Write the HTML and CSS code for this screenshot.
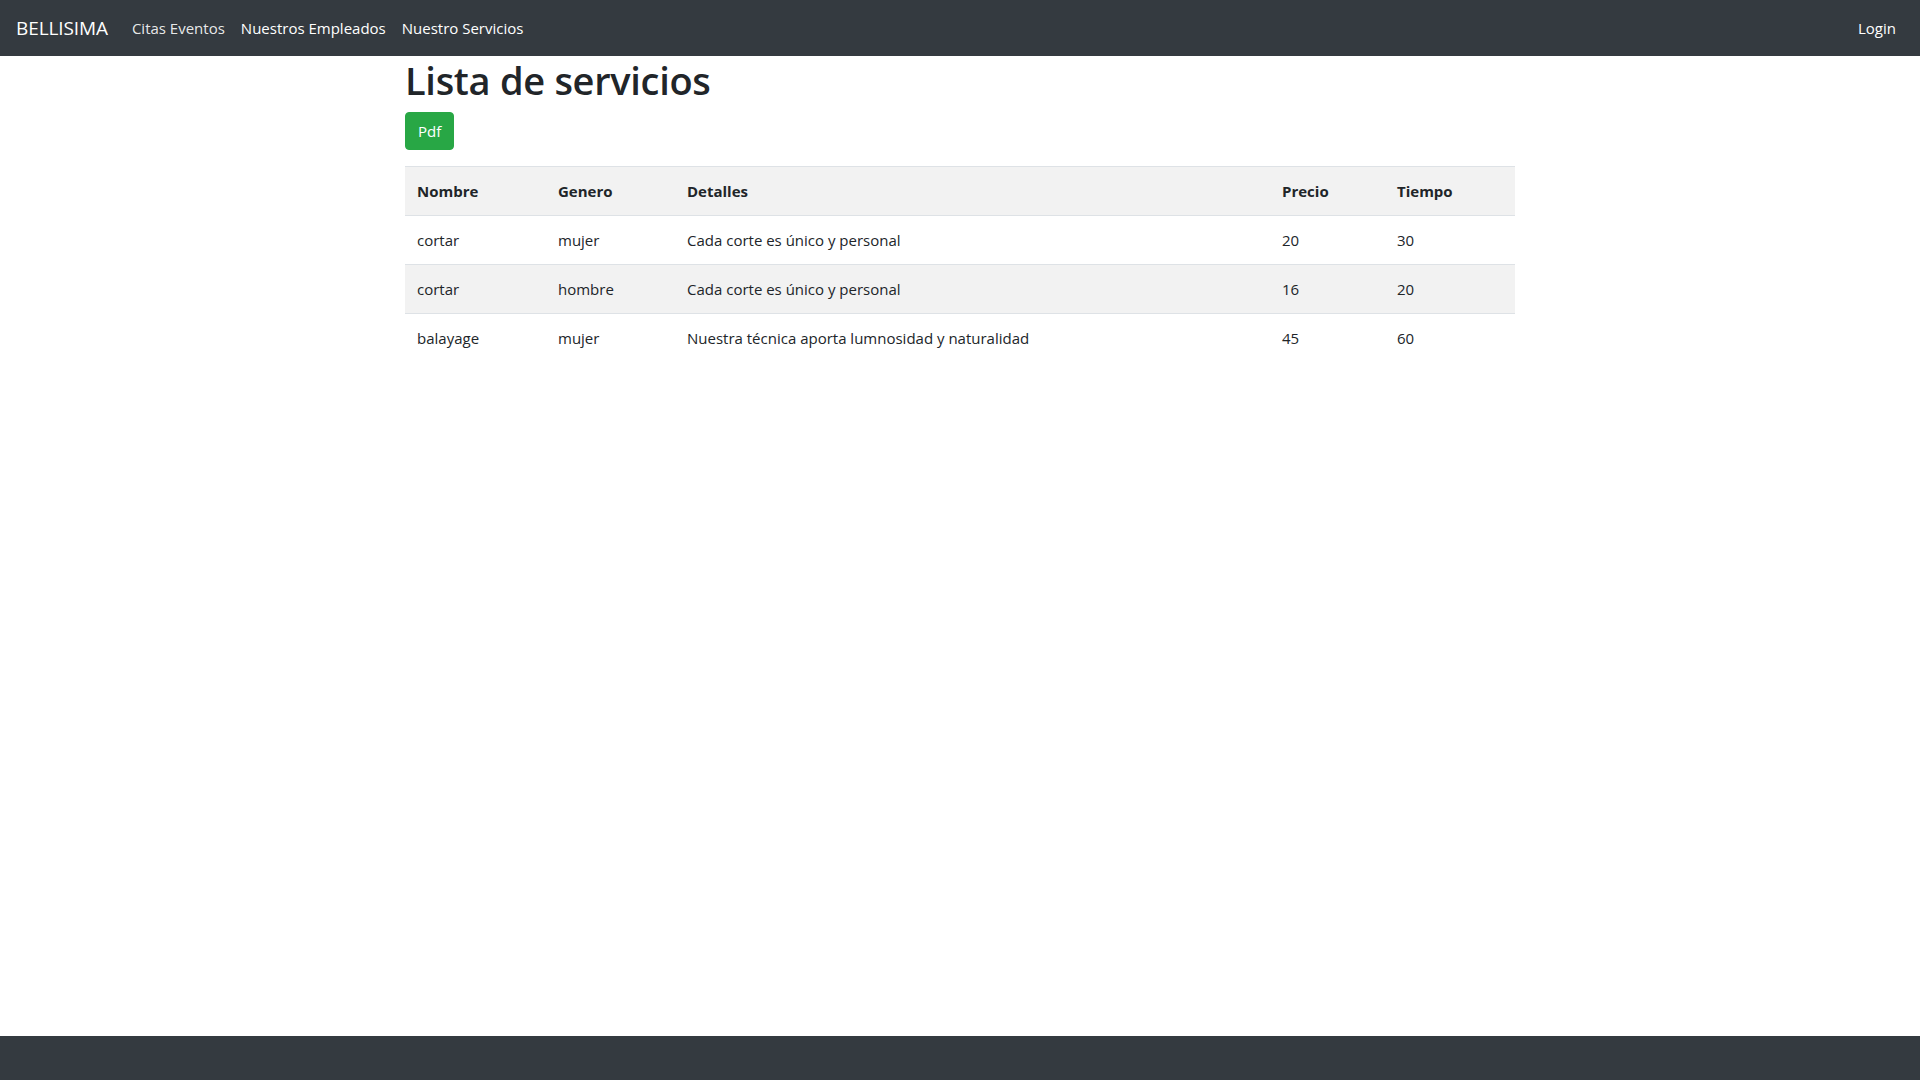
FILE: index.html
```html
<!DOCTYPE html>
<html lang="es">
<head>
<meta charset="utf-8">
<title>Lista de servicios</title>
<link rel="stylesheet" href="styles.css">
</head>
<body>
<nav class="navbar">
  <a class="brand" href="#">BELLISIMA</a>
  <ul class="nav-links">
    <li><a class="nav-link dim" href="#">Citas Eventos</a></li>
    <li><a class="nav-link" href="#">Nuestros Empleados</a></li>
    <li><a class="nav-link" href="#">Nuestro Servicios</a></li>
  </ul>
  <a class="nav-link login" href="#">Login</a>
</nav>
<main class="container">
  <h1 class="title">Lista de servicios</h1>
  <a class="btn-pdf" href="#">Pdf</a>
  <table class="table">
    <colgroup>
      <col class="c-nombre"><col class="c-genero"><col class="c-detalles"><col class="c-precio"><col class="c-tiempo">
    </colgroup>
    <tbody>
      <tr class="shade head">
        <th>Nombre</th><th>Genero</th><th>Detalles</th><th>Precio</th><th>Tiempo</th>
      </tr>
      <tr>
        <td>cortar</td><td>mujer</td><td>Cada corte es único y personal</td><td>20</td><td>30</td>
      </tr>
      <tr class="shade">
        <td>cortar</td><td>hombre</td><td>Cada corte es único y personal</td><td>16</td><td>20</td>
      </tr>
      <tr>
        <td>balayage</td><td>mujer</td><td>Nuestra técnica aporta lumnosidad y naturalidad</td><td>45</td><td>60</td>
      </tr>
    </tbody>
  </table>
</main>
<footer class="footer"></footer>
</body>
</html>
```
FILE: styles.css
```css
* { box-sizing: border-box; }
html, body { margin: 0; padding: 0; }
body {
  font-family: "Open Sans", "Noto Sans", "Liberation Sans", sans-serif;
  font-size: 15px;
  line-height: 24px;
  color: #212529;
  background: #fff;
  min-height: 100vh;
  display: flex;
  flex-direction: column;
}
a { text-decoration: none; }

.navbar {
  height: 56px;
  background: #343a40;
  display: flex;
  align-items: center;
  padding: 8px 16px;
}
.brand {
  color: #fff;
  font-size: 19px;
  line-height: 30px;
  margin-right: 16px;
  letter-spacing: -0.1px;
}
.nav-links {
  list-style: none;
  margin: 0;
  padding: 0;
  display: flex;
  flex: 1;
}
.nav-link {
  display: block;
  padding: 8px;
  color: #fff;
  font-size: 15px;
}
.nav-link.dim { color: rgba(255,255,255,0.9); }
.login { padding-right: 8px; }

.container {
  flex: 1;
  width: 1140px;
  margin: 0 auto;
  padding: 0 15px;
}
.title {
  margin: 0 0 8px;
  font-size: 38px;
  font-weight: 600;
  line-height: 48px;
  letter-spacing: -0.3px;
}
.btn-pdf {
  display: inline-block;
  height: 38px;
  padding: 6px 12px;
  background: #28a745;
  color: #fff;
  border: 1px solid #28a745;
  border-radius: 4px;
  font-size: 15px;
  line-height: 24px;
}
.table {
  width: 100%;
  margin-top: 16px;
  border-collapse: collapse;
  table-layout: fixed;
}
.c-nombre { width: 141px; }
.c-genero { width: 129px; }
.c-detalles { width: 595px; }
.c-precio { width: 115px; }
.c-tiempo { width: 130px; }
.table th, .table td {
  padding: 12px;
  border-top: 1px solid #dee2e6;
  text-align: left;
  vertical-align: top;
  font-size: 15px;
  line-height: 24px;
  white-space: nowrap;
}
.table th { font-weight: 700; }
.shade { background: #f2f2f2; }

.footer {
  height: 44px;
  background: #343a40;
}
```
